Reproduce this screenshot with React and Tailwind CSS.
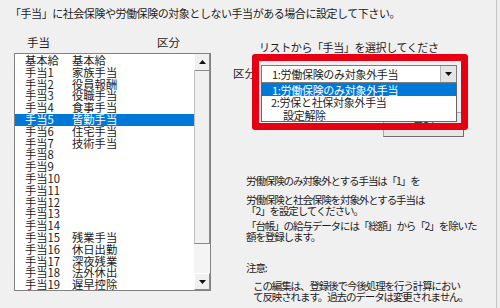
import React from "react";

const rows = [
  ["基本給", "基本給"],
  ["手当1", "家族手当"],
  ["手当2", "役員報酬"],
  ["手当3", "役職手当"],
  ["手当4", "食事手当"],
  ["手当5", "皆勤手当"],
  ["手当6", "住宅手当"],
  ["手当7", "技術手当"],
  ["手当8", ""],
  ["手当9", ""],
  ["手当10", ""],
  ["手当11", ""],
  ["手当12", ""],
  ["手当13", ""],
  ["手当14", ""],
  ["手当15", "残業手当"],
  ["手当16", "休日出勤"],
  ["手当17", "深夜残業"],
  ["手当18", "法外休出"],
  ["手当19", "遅早控除"],
];

function Arrow({ up }) {
  return (
    <svg width="7" height="4" viewBox="0 0 7 4">
      <path d={up ? "M0 4 L3.5 0 L7 4 Z" : "M0 0 L3.5 4 L7 0 Z"} fill="#111" />
    </svg>
  );
}

function AllowanceList() {
  return (
    <div className="ml-[14px] mt-[5px] w-[197px] h-[238px] border border-[#828282] bg-white flex">
      <div className="flex-1 pt-[1px] overflow-hidden">
        {rows.map(([code, name], i) => (
          <div
            key={code}
            className={
              "flex h-[11.8px] leading-[11.8px] text-[11.3px] " +
              (i === 5 ? "bg-[#0078d7] text-white" : "")
            }
          >
            <span className="pl-[10px] w-[57px] whitespace-nowrap">{code}</span>
            <span className="whitespace-nowrap">{name}</span>
          </div>
        ))}
      </div>
      {/* scrollbar */}
      <div className="w-[16px] flex flex-col bg-[#f4f4f4]">
        <div className="h-[17px] flex items-center justify-center bg-[#f0f0f0] border-b border-r border-[#8a8a8a] border-l border-l-white">
          <Arrow up />
        </div>
        <div className="h-[173px] bg-[#f0f0f0] border-r border-b border-[#8a8a8a] border-l border-l-[#bdbdbd]" />
        <div className="flex-1" />
        <div className="h-[17px] flex items-center justify-center bg-[#f0f0f0] border-b border-r border-t border-[#8a8a8a] border-t-white border-l border-l-white">
          <Arrow />
        </div>
      </div>
    </div>
  );
}

export default function App() {
  return (
    <div className="w-[500px] h-[308px] bg-[#f0f0f0] relative overflow-hidden text-[#1c1c1c] font-['Noto_Sans_CJK_JP','Noto_Sans',sans-serif]">
      <div className="w-[497px] h-full border-r border-[#c6c6c6]">
        <p className="pt-[6px] pl-[10px] text-[11px] leading-[14px] tracking-[-0.45px] whitespace-nowrap">
          「手当」に社会保険や労働保険の対象としない手当がある場合に設定して下さい。
        </p>

        <div className="flex">
          <div className="w-[211px]">
            <div className="flex pl-[27px] mt-[16px] h-[12px] leading-[12px] text-[11.5px]">
              <span className="w-[130px]">手当</span>
              <span>区分</span>
            </div>
            <AllowanceList />
          </div>

          <div className="flex-1 text-[11px]">
            <p className="mt-[22px] pl-[48px] leading-[11px] tracking-[-0.4px] whitespace-nowrap">
              リストから「手当」を選択してくださ
            </p>
            <div className="flex items-center mt-[12px] h-[18px]">
              <span className="pl-[22px] w-[50px] text-[11.5px]">区分</span>
              <div className="w-[196px] h-[18px] border border-[#7a7a7a] bg-white flex items-center">
                <span className="flex-1 pl-[10px] leading-[14px] tracking-[-0.3px] whitespace-nowrap">
                  1:労働保険のみ対象外手当
                </span>
                <div className="w-[16px] h-full flex items-center justify-center bg-[#e5e5e5] border-l border-[#b5b5b5]">
                  <Arrow />
                </div>
              </div>
            </div>
            <div className="ml-[172px] mt-[29px] w-[81px] h-[25px] bg-[#e6e6e6] border border-[#a8a8a8] border-b-[#6e6e6e] border-r-[#6e6e6e] flex items-center justify-center text-[11px]">
              登録
            </div>

            <div className="pl-[35px] text-[10.5px] leading-[11px] tracking-[-1.1px] whitespace-nowrap">
              <p className="mt-[38px]">労働保険のみ対象外とする手当は「1」を</p>
              <p className="mt-[8px]">労働保険と社会保険を対象外とする手当は</p>
              <p>「2」を設定してください。</p>
              <p className="mt-[4px]">「台帳」の給与データには「総額」から「2」を除いた</p>
              <p>額を登録します。</p>
              <p className="mt-[20px]">注意:</p>
              <p className="mt-[7px] pl-[7px]">この編集は、登録後で今後処理を行う計算におい</p>
              <p className="pl-[7px]">て反映されます。過去のデータは変更されません。</p>
            </div>
          </div>
        </div>
      </div>

      {/* open dropdown list */}
      <div className="absolute left-[261px] top-[83px] w-[196px] h-[39px] bg-white border border-[#646464] text-[11px] leading-[12.3px] tracking-[-0.3px] whitespace-nowrap">
        <div className="bg-[#0078d7] text-white pl-[10px]">1:労働保険のみ対象外手当</div>
        <div className="pl-[9px]">2:労保と社保対象外手当</div>
        <div className="pl-[21px]">設定解除</div>
      </div>

      {/* red highlight frame */}
      <div className="absolute left-[252px] top-[54px] w-[216px] h-[76px] border-[7px] border-[#e60012] rounded-[3px]" />
    </div>
  );
}
